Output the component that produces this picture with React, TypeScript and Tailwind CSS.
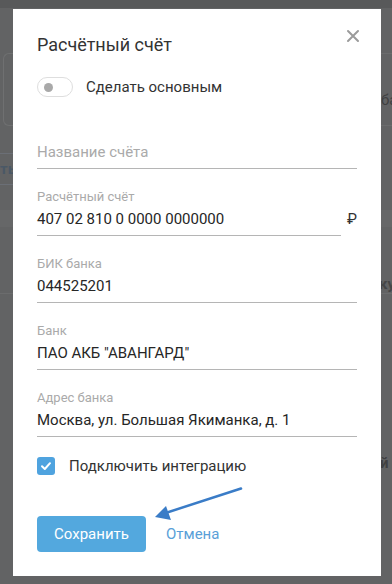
import React from "react";

const font = { fontFamily: "Roboto, 'Noto Sans', 'Liberation Sans', sans-serif" };

function Field({ label, value, suffix }: { label: string; value: string; suffix?: string }) {
  return (
    <div className="mt-[20px] flex items-start">
      <div className="flex-1 border-b border-[#b5b5b5] pb-[5px]">
        <div className="h-[16px] text-[13px] leading-[16px] text-[#aaaaaa]">{label}</div>
        <div className="mt-[3px] h-[22px] text-[15px] leading-[22px] text-[#262626]">{value}</div>
      </div>
      {suffix ? (
        <div className="ml-[6px] mt-[19px] w-[10px] text-right text-[15px] leading-[22px] text-[#333]">{suffix}</div>
      ) : null}
    </div>
  );
}

export default function App() {
  return (
    <div className="relative h-[584px] w-[392px] overflow-hidden bg-[#626364]" style={font}>
      {/* dimmed page behind */}
      <div className="flex flex-col">
        <div className="h-[8px] bg-[#58595a]" />
        <div className="h-[45px]" />
        <div className="flex h-[73px] justify-between">
          <div className="ml-[3px] w-[20px] rounded-l-[6px] border border-r-0 border-[#6f7071]" />
          <div className="flex w-[20px] items-end border-y border-[#6b6c6d] pb-[15px] pl-[9px] text-[15px] leading-[20px] text-[#3f4041]">ба</div>
        </div>
        <div className="h-[27px]" />
        <div className="flex h-[32px] justify-between">
          <div className="flex w-[20px] items-center border-y border-[#6b6f76] text-[15px] font-bold text-[#4a5866]">ть</div>
          <div />
        </div>
        <div className="h-[25px]" />
        <div className="h-[17px] bg-[#666768]" />
        <div className="flex h-[67px] justify-between">
          <div className="w-[20px] self-end border-b border-[#6b6c6d]" />
          <div className="flex w-[20px] items-end border-b border-[#6b6c6d] pb-[0px] pl-[7px] text-[15px] font-bold leading-[18px] text-[#454647]">ку</div>
        </div>
        <div className="flex h-[180px] justify-end">
          <div className="flex w-[12px] items-end text-[15px] font-bold text-[#3f4041]">й</div>
        </div>
      </div>

      {/* modal */}
      <div className="absolute left-[13px] top-[9px] w-[368px] bg-white px-[24px] pb-[24px] pt-[24px]">
        <div className="flex h-[24px] items-center justify-between">
          <div className="text-[18px] leading-[24px] text-[#333333]">Расчётный счёт</div>
          <svg width="14" height="14" viewBox="0 0 14 14" className="-mr-[3px] -mt-[19px]">
            <path d="M2 2 L12 12 M12 2 L2 12" stroke="#9b9b9b" strokeWidth="2" strokeLinecap="round" />
          </svg>
        </div>

        <div className="mt-[20px] flex h-[20px] items-center">
          <div className="flex h-[20px] w-[36px] items-center rounded-full border border-[#dedede] pl-[6px]">
            <div className="h-[9px] w-[9px] rounded-full bg-[#a9a9a9]" />
          </div>
          <div className="ml-[13px] text-[15px] leading-[20px] text-[#333333]">Сделать основным</div>
        </div>

        <div className="mt-[44px] border-b border-[#b5b5b5] pb-[5px]">
          <div className="h-[22px] text-[15px] leading-[22px] text-[#aaaaaa]">Название счёта</div>
        </div>

        <Field label="Расчётный счёт" value="407 02 810 0 0000 0000000" suffix="₽" />
        <Field label="БИК банка" value="044525201" />
        <Field label="Банк" value={'ПАО АКБ "АВАНГАРД"'} />
        <Field label="Адрес банка" value="Москва, ул. Большая Якиманка, д. 1" />

        <div className="mt-[20px] flex h-[18px] items-center">
          <div className="flex h-[18px] w-[18px] items-center justify-center rounded-[3px] bg-[#4fa3df]">
            <svg width="12" height="12" viewBox="0 0 12 12">
              <path d="M2 6.2 L4.8 9 L10 3.2" stroke="#ffffff" strokeWidth="2" fill="none" strokeLinecap="round" strokeLinejoin="round" />
            </svg>
          </div>
          <div className="ml-[14px] text-[15px] leading-[18px] text-[#333333]">Подключить интеграцию</div>
        </div>

        <div className="mt-[41px] flex items-center">
          <button className="h-[36px] w-[109px] rounded-[4px] bg-[#53a8de] text-[15px] text-white">Сохранить</button>
          <span className="ml-[20px] text-[15px] text-[#5a9fd8]">Отмена</span>
        </div>
      </div>

      {/* annotation arrow */}
      <svg className="absolute left-0 top-0" width="392" height="584" viewBox="0 0 392 584">
        <path d="M241 488.5 L164 513.5" stroke="#3a7cc7" strokeWidth="2.5" strokeLinecap="round" />
        <polygon points="155,517 166,506 171,520" fill="#3a7cc7" />
      </svg>
    </div>
  );
}
